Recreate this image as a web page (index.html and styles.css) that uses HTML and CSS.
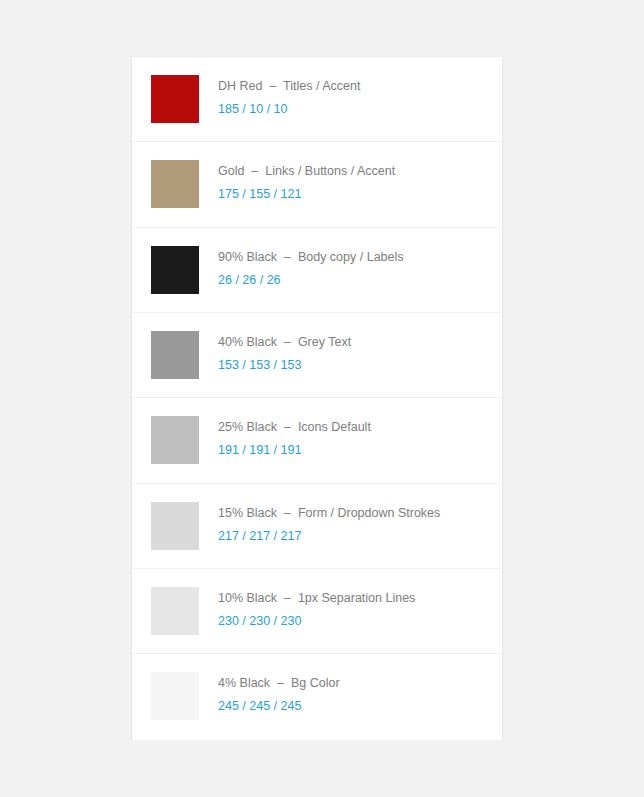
FILE: index.html
```html
<!DOCTYPE html>
<html>
<head>
<meta charset="utf-8">
<link rel="stylesheet" href="styles.css">
</head>
<body>
<div class="card">
  <div class="row"><div class="swatch red"></div><div class="info"><div class="name">DH Red&nbsp; –&nbsp; Titles / Accent</div><div class="rgb">185 / 10 / 10</div></div></div>
  <div class="row"><div class="swatch gold"></div><div class="info"><div class="name">Gold&nbsp; –&nbsp; Links / Buttons / Accent</div><div class="rgb">175 / 155 / 121</div></div></div>
  <div class="row"><div class="swatch k90"></div><div class="info"><div class="name">90% Black&nbsp; –&nbsp; Body copy / Labels</div><div class="rgb">26 / 26 / 26</div></div></div>
  <div class="row"><div class="swatch k40"></div><div class="info"><div class="name">40% Black&nbsp; –&nbsp; Grey Text</div><div class="rgb">153 / 153 / 153</div></div></div>
  <div class="row"><div class="swatch k25"></div><div class="info"><div class="name">25% Black&nbsp; –&nbsp; Icons Default</div><div class="rgb">191 / 191 / 191</div></div></div>
  <div class="row"><div class="swatch k15"></div><div class="info"><div class="name">15% Black&nbsp; –&nbsp; Form / Dropdown Strokes</div><div class="rgb">217 / 217 / 217</div></div></div>
  <div class="row"><div class="swatch k10"></div><div class="info"><div class="name">10% Black&nbsp; –&nbsp; 1px Separation Lines</div><div class="rgb">230 / 230 / 230</div></div></div>
  <div class="row"><div class="swatch k4"></div><div class="info"><div class="name">4% Black&nbsp; –&nbsp; Bg Color</div><div class="rgb">245 / 245 / 245</div></div></div>
</div>
</body>
</html>
```
FILE: styles.css
```css
html, body {
  margin: 0;
  padding: 0;
  background: #f2f2f2;
  font-family: "Liberation Sans", Arial, sans-serif;
}
body {
  padding-top: 57px;
  padding-left: 132px;
}
.card {
  width: 370px;
  background: #fff;
  box-shadow: 0 1px 2px rgba(0,0,0,0.1), 0 0 0 1px rgba(0,0,0,0.02);
}
.row {
  display: flex;
  align-items: flex-start;
  height: 84.33px;
  border-bottom: 1px solid #f2f2f2;
  box-sizing: content-box;
}
.row:last-child {
  border-bottom: none;
  height: 85.33px;
}
.swatch {
  width: 48px;
  height: 48px;
  margin: 18px 19px 0 19px;
  flex: none;
}
.info {
  padding-top: 22px;
}
.name {
  font-size: 12.5px;
  line-height: 15px;
  color: #7d7d7d;
}
.rgb {
  margin-top: 8px;
  font-size: 12.5px;
  line-height: 15px;
  color: #1e9fe6;
}
.red { background: #b90a0a; }
.gold { background: #af9b79; }
.k90 { background: #1a1a1a; }
.k40 { background: #999999; }
.k25 { background: #bfbfbf; }
.k15 { background: #d9d9d9; }
.k10 { background: #e6e6e6; }
.k4 { background: #f5f5f5; }
```
